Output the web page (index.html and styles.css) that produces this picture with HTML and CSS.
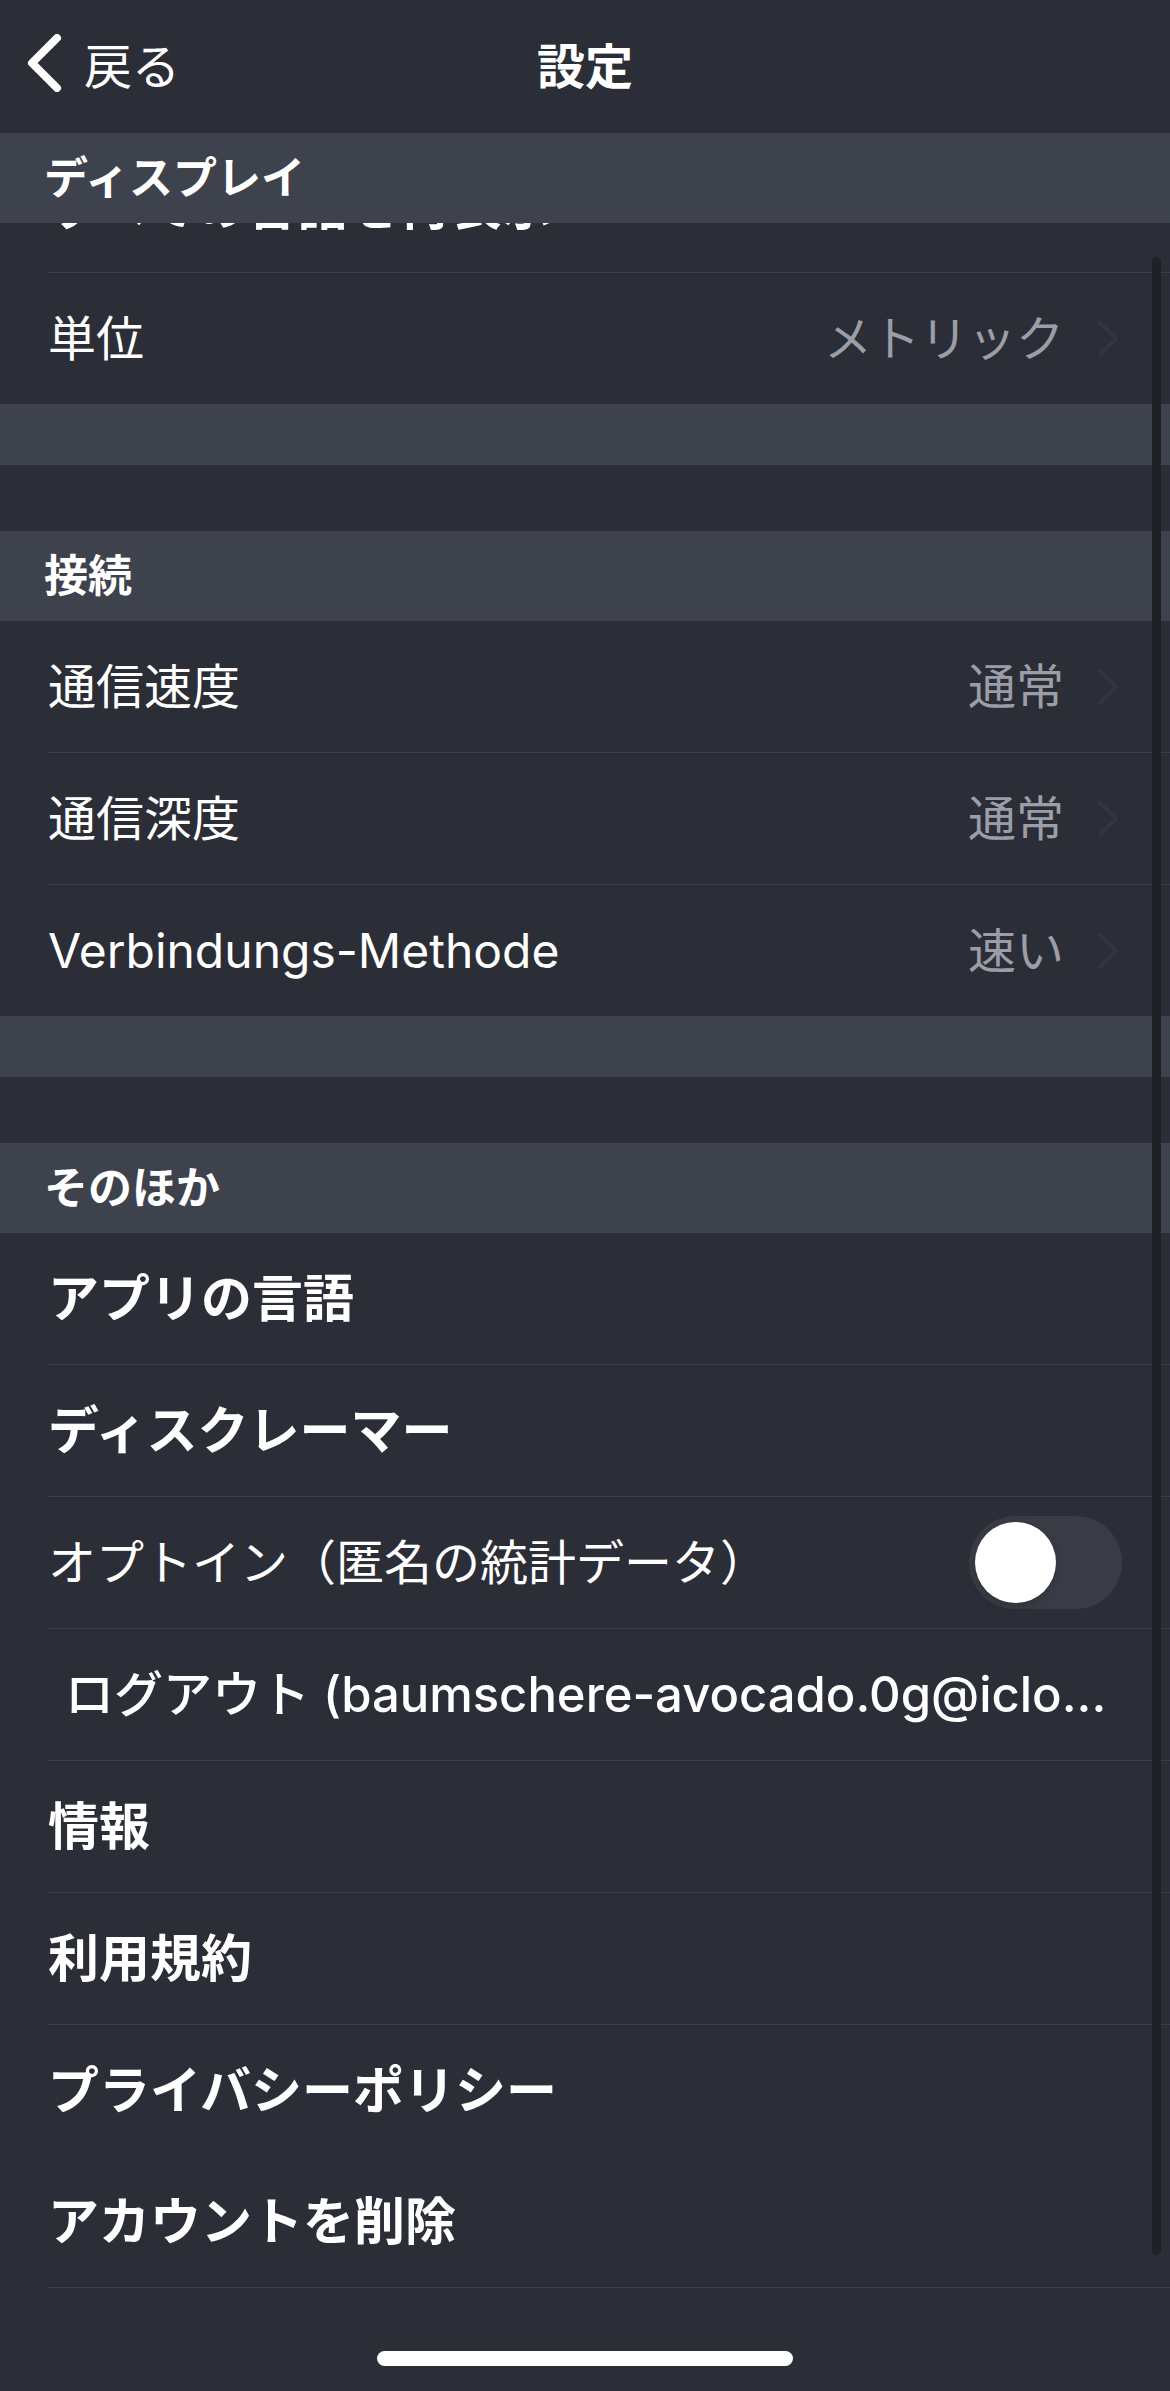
FILE: index.html
```html
<!DOCTYPE html>
<html lang="ja">
<head>
  <meta charset="UTF-8">
  <meta name="viewport" content="width=device-width, initial-scale=1.0">
  <title>設定</title>
  <link rel="stylesheet" href="styles.css">
</head>
<body>
  <div class="screen">
    <header class="navbar">
      <a class="back" href="#">
        <svg class="back-icon" width="36" height="58" viewBox="0 0 36 58">
          <polyline points="31,4 6,29 31,54" fill="none" stroke="#fff" stroke-width="8" stroke-linecap="round" stroke-linejoin="round"/>
        </svg>
        <span>戻る</span>
      </a>
      <h1 class="title">設定</h1>
      <div></div>
    </header>

    <section class="group">
      <div class="section-header">ディスプレイ</div>
      <div class="row row-clipped"><span class="label bold">すべての言語を再表示</span></div>
      <div class="row">
        <span class="label">単位</span>
        <span class="value">メトリック</span>
        <svg class="chevron" width="22" height="36" viewBox="0 0 22 36"><polyline points="3,2 19,18 3,34" fill="none" stroke="#32353e" stroke-width="4" stroke-linecap="round" stroke-linejoin="round"/></svg>
      </div>
      <div class="section-footer"></div>
    </section>

    <section class="group">
      <div class="section-header">接続</div>
      <div class="row">
        <span class="label">通信速度</span>
        <span class="value">通常</span>
        <svg class="chevron" width="22" height="36" viewBox="0 0 22 36"><polyline points="3,2 19,18 3,34" fill="none" stroke="#32353e" stroke-width="4" stroke-linecap="round" stroke-linejoin="round"/></svg>
      </div>
      <div class="row">
        <span class="label">通信深度</span>
        <span class="value">通常</span>
        <svg class="chevron" width="22" height="36" viewBox="0 0 22 36"><polyline points="3,2 19,18 3,34" fill="none" stroke="#32353e" stroke-width="4" stroke-linecap="round" stroke-linejoin="round"/></svg>
      </div>
      <div class="row">
        <span class="label">Verbindungs-Methode</span>
        <span class="value">速い</span>
        <svg class="chevron" width="22" height="36" viewBox="0 0 22 36"><polyline points="3,2 19,18 3,34" fill="none" stroke="#32353e" stroke-width="4" stroke-linecap="round" stroke-linejoin="round"/></svg>
      </div>
      <div class="section-footer"></div>
    </section>

    <section class="group group-last">
      <div class="section-header">そのほか</div>
      <div class="row"><span class="label bold">アプリの言語</span></div>
      <div class="row"><span class="label bold">ディスクレーマー</span></div>
      <div class="row">
        <span class="label">オプトイン（匿名の統計データ）</span>
        <div class="switch"><div class="knob"></div></div>
      </div>
      <div class="row"><span class="label logout">ログアウト (baumschere-avocado.0g@iclo...</span></div>
      <div class="row"><span class="label bold">情報</span></div>
      <div class="row"><span class="label bold">利用規約</span></div>
      <div class="row"><span class="label bold">プライバシーポリシー</span></div>
      <div class="row"><span class="label bold">アカウントを削除</span></div>
    </section>

    <div class="home-indicator"></div>
    <div class="scrollbar"></div>
  </div>
</body>
</html>
```

FILE: styles.css
```css
body {
  margin: 0;
  padding: 0;
  background-color: #2b2e37;
  color: #fff;
  font-family: "Inter", "Noto Sans CJK JP", sans-serif;
  line-height: 1;
}
.screen {
  position: relative;
  width: 1170px;
  height: 2391px;
  overflow: hidden;
}
.navbar {
  height: 133px;
  box-sizing: border-box;
  padding-bottom: 7px;
  display: grid;
  grid-template-columns: 1fr auto 1fr;
  align-items: center;
}
.back {
  display: flex;
  align-items: center;
  gap: 22px;
  padding-left: 26px;
  color: #fff;
  text-decoration: none;
  font-size: 48px;
  font-family: "Noto Sans CJK JP", sans-serif;
}
.title {
  margin: 0;
  font-size: 48px;
  font-weight: 700;
  font-family: "Noto Sans CJK JP", sans-serif;
}
.section-header {
  height: 90px;
  background: #3e424d;
  display: flex;
  align-items: center;
  padding-left: 44px;
  font-size: 44px;
  font-weight: 700;
}
.section-footer {
  height: 61px;
  background: #3e424d;
  margin-bottom: 66px;
}
.row {
  margin-left: 48px;
  padding-right: 51px;
  height: 131px;
  display: flex;
  align-items: center;
  border-bottom: 1px solid #3b3f49;
  font-size: 48px;
}
.group .row:nth-last-child(2) {
  border-bottom: none;
}
.group-last .row:last-child {
  border-bottom: 1px solid #3b3f49;
}
.row-clipped {
  height: 49px;
  align-items: flex-start;
  overflow: hidden;
}
.row-clipped .label {
  margin-top: -42px;
  line-height: 51px;
}
.label {
  white-space: nowrap;
}
.bold {
  font-size: 51px;
  font-weight: 700;
}
.logout {
  padding-left: 17px;
  font-size: 49px;
  font-weight: 500;
}
.value {
  margin-left: auto;
  color: #9a9ea7;
}
.chevron {
  margin-left: 33px;
}
.switch {
  margin-left: auto;
  margin-right: -3px;
  width: 153px;
  height: 93px;
  box-sizing: border-box;
  padding: 6px;
  border-radius: 47px;
  background: #393b45;
}
.knob {
  width: 81px;
  height: 81px;
  border-radius: 50%;
  background: #fff;
  box-shadow: 0 3px 8px rgba(0, 0, 0, 0.15);
}
.home-indicator {
  width: 416px;
  height: 15px;
  margin: 63px auto 0;
  border-radius: 8px;
  background: #fff;
}
.scrollbar {
  position: absolute;
  left: 1152px;
  top: 257px;
  width: 9px;
  height: 1998px;
  border-radius: 5px;
  background: #1f2127;
}
```
